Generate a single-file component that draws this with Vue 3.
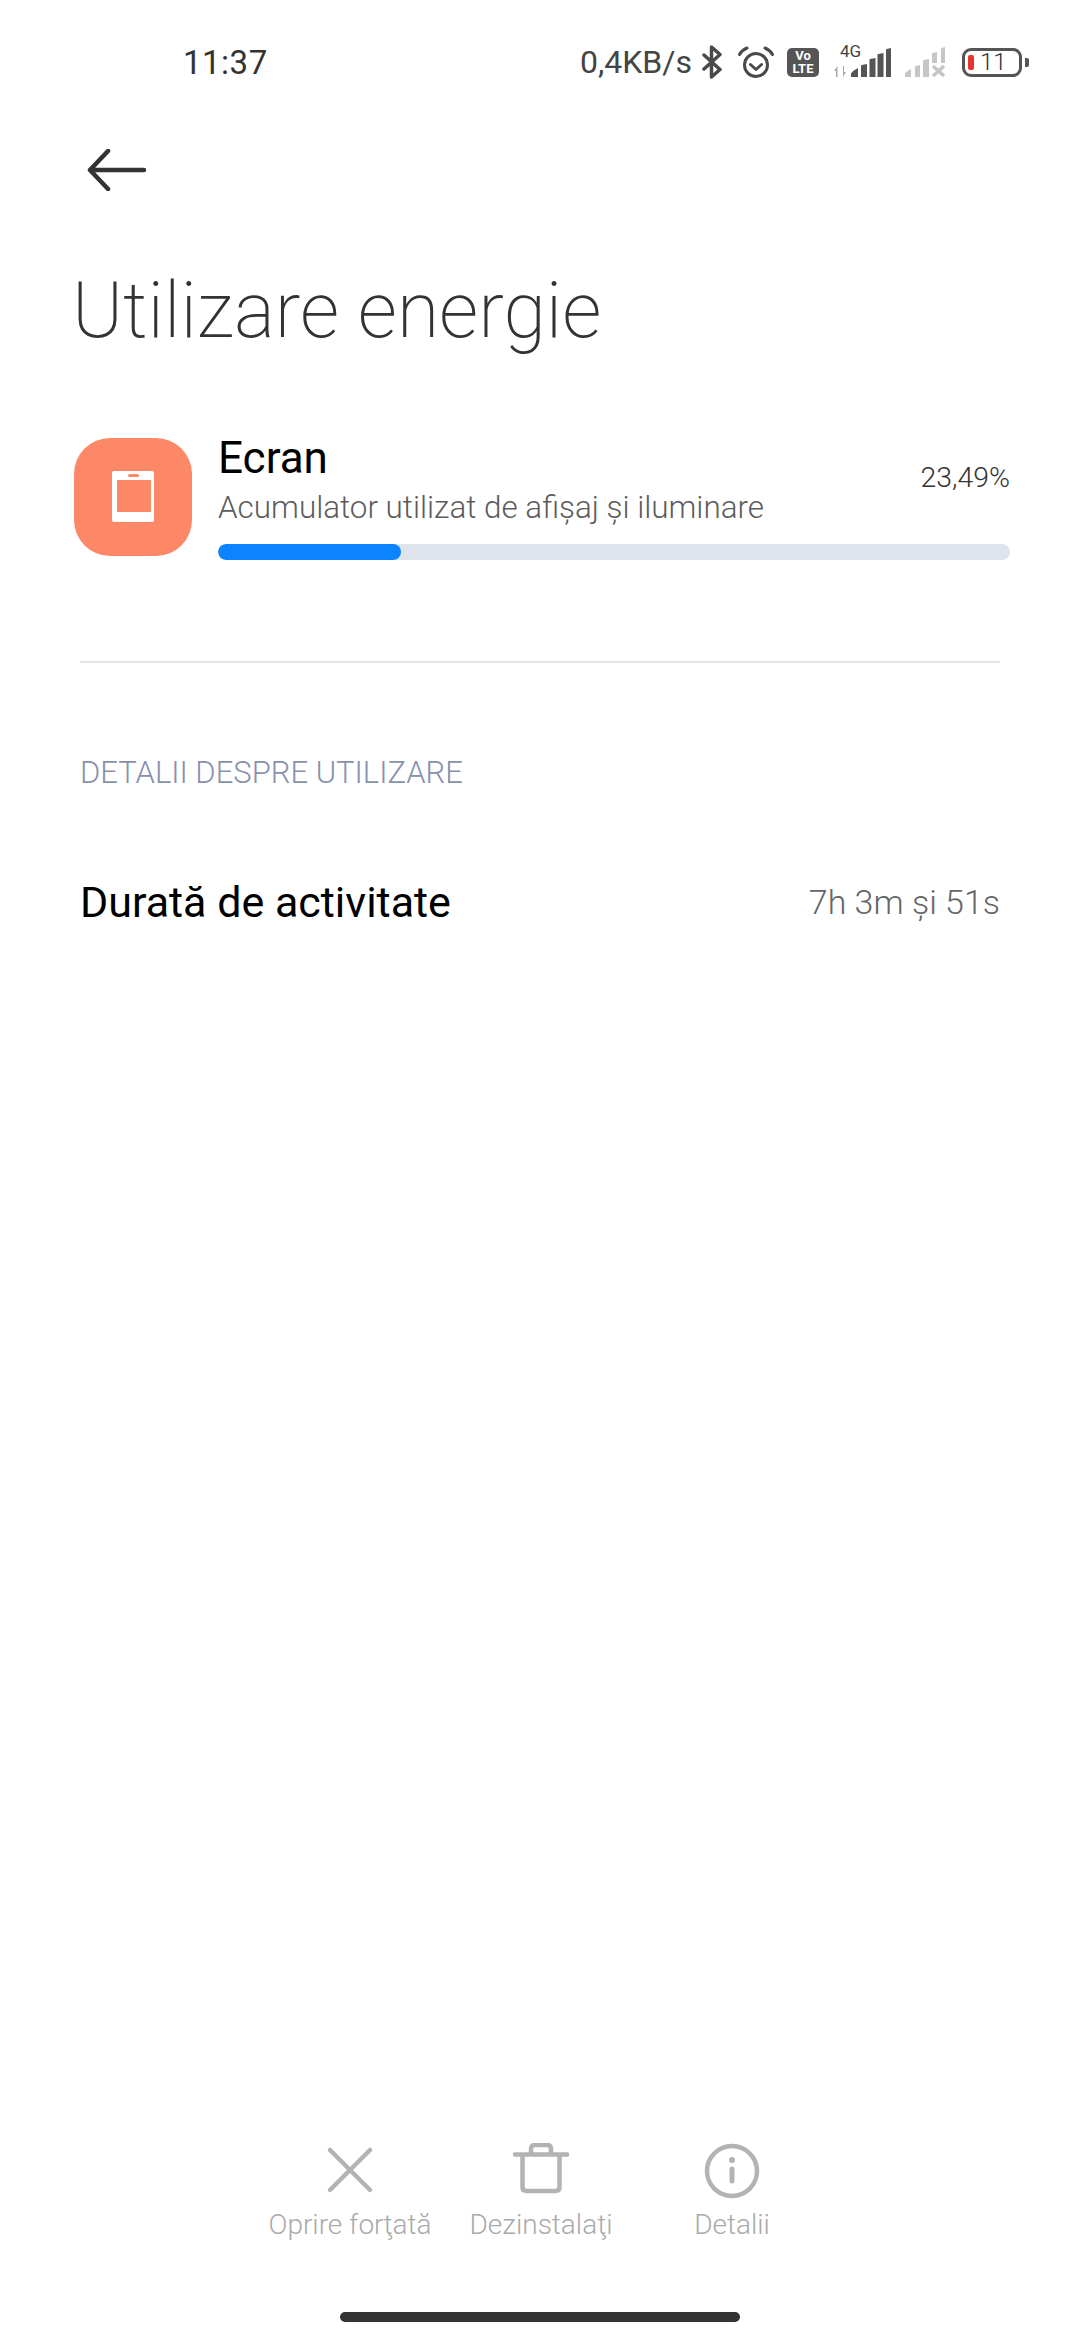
<script setup>
const actions = [
  { key: 'stop', label: 'Oprire forţată' },
  { key: 'trash', label: 'Dezinstalaţi' },
  { key: 'info', label: 'Detalii' },
]
</script>

<template>
  <div class="page">
    <header class="status">
      <span class="time">11:37</span>
      <div class="status-right">
        <span class="speed">0,4KB/s</span>
        <svg class="bt" width="20" height="34" viewBox="0 0 20 34" fill="none" stroke="#4a4a4a" stroke-width="3.500" stroke-linejoin="round" stroke-linecap="round"><path d="M2 10 18 24.500 9.500 32V2L18 9.500 2 24"/></svg>
        <svg class="alarm" width="36" height="33" viewBox="0 0 36 33" fill="none" stroke="#4a4a4a" stroke-width="3" stroke-linecap="round" stroke-linejoin="round"><circle cx="18" cy="19" r="11.500"/><path d="M12.500 18.500 18 23.500 23.500 18.500M1.500 8.500Q4 4 9 2M34.500 8.500Q32 4 27 2"/></svg>
        <div class="volte"><span>Vo</span><span>LTE</span></div>
        <div class="signal">
          <span class="g4">4G</span>
          <svg width="58" height="34" viewBox="0 0 58 34" fill="#555"><path d="M3 32v-6H1l3.500-5v11zM10 32V21h1v6h2l-3 5z" fill="#aaa"/><path d="M18 32v-3.500q2-3 7-5.500h0v9zM28 32V21q0-.8 .8-1l5.200-1v13zM36.500 32V15q0-.8 .8-1l5.200-1v19zM44.500 32V10q0-.8 .8-1l5.200-1v24zM53 32V5q0-.8 .8-1L58 3v29z"/></svg>
        </div>
        <svg class="signal2" width="40" height="34" viewBox="0 0 40 34" fill="#c6c6c6"><path d="M0 32v-3.500q2-2.500 6-4.500v8zM10 32V22q0-.8 .8-1l4.200-1v12zM18 32V16q0-.8 .8-1l5.200-1v18zM27 18V9q0-.8 .8-1l4.200-1v11zM36 18V4q0-.8 .8-1l3.200-1v16z"/><path d="M28 21l11 10M39 21 28 31" stroke="#c6c6c6" stroke-width="3.500" fill="none"/></svg>
        <div class="battery">
          <div class="battery-body"><i class="level"></i><span>11</span></div>
          <i class="nub"></i>
        </div>
      </div>
    </header>

    <div class="back">
      <svg width="60" height="42" viewBox="0 0 60 42" fill="none" stroke="#333" stroke-width="4.500" stroke-linecap="round" stroke-linejoin="round"><path d="M57 21H3M21 2 3 21l18 19"/></svg>
    </div>

    <h1 class="title">Utilizare energie</h1>

    <section class="app">
      <div class="app-icon">
        <svg width="42" height="51" viewBox="0 0 42 51"><path fill-rule="evenodd" fill="#fff" d="M2 0h38q2 0 2 2v47q0 2-2 2H2q-2 0-2-2V2q0-2 2-2zM5 9v32h34V9z"/><rect x="16" y="3" width="11" height="3" rx="1.500" fill="#fd8868"/></svg>
      </div>
      <div class="app-info">
        <div class="app-top">
          <div>
            <div class="app-name">Ecran</div>
            <div class="app-sub">Acumulator utilizat de afișaj și iluminare</div>
          </div>
          <div class="percent">23,49%</div>
        </div>
        <div class="track"><div class="fill"></div></div>
      </div>
    </section>

    <hr class="divider" />

    <div class="section">DETALII DESPRE UTILIZARE</div>

    <div class="row">
      <span class="row-label">Durată de activitate</span>
      <span class="row-value">7h 3m și 51s</span>
    </div>

    <nav class="actions">
      <div v-for="a in actions" :key="a.key" class="action">
        <svg v-if="a.key === 'stop'" width="56" height="56" viewBox="0 0 56 56" fill="none" stroke="#b3b3b3" stroke-width="4.500" stroke-linecap="round"><path d="M8 7l40 40M48 7 8 47"/></svg>
        <svg v-else-if="a.key === 'trash'" width="56" height="56" viewBox="0 0 56 56" fill="none" stroke="#b3b3b3" stroke-width="4.500" stroke-linecap="round" stroke-linejoin="round"><path d="M2 11.500h52M9.500 11.500V44q0 4 4 4h29q4 0 4-4V11.500M18 11.500V6q0-4 4-4h12q4 0 4 4v5.500"/></svg>
        <svg v-else width="56" height="56" viewBox="0 0 56 56" fill="none" stroke="#b3b3b3" stroke-width="4.500" stroke-linecap="round"><circle cx="28" cy="28" r="25"/><path d="M28 26v12" stroke-width="5"/><circle cx="28" cy="17" r="3" fill="#b3b3b3" stroke="none"/></svg>
        <span class="action-label">{{ a.label }}</span>
      </div>
    </nav>

    <div class="home"></div>
  </div>
</template>

<style>
body { margin: 0; background: #fff; }
</style>

<style scoped>
.page {
  width: 1080px;
  height: 2340px;
  display: flex;
  flex-direction: column;
  background: #fff;
  font-family: Roboto, "Noto Sans", sans-serif;
  overflow: hidden;
}
.status {
  height: 124px;
  flex: none;
  display: flex;
  align-items: center;
  justify-content: space-between;
  padding: 0 51px 0 183px;
  box-sizing: border-box;
}
.time { font-size: 33px; color: #333; letter-spacing: .5px; }
.status-right { display: flex; align-items: center; }
.speed { font-size: 32px; color: #444; }
.bt { margin-left: 10px; }
.alarm { margin-left: 16px; }
.volte {
  margin-left: 13px;
  width: 32px;
  height: 29px;
  border-radius: 5px;
  background: #555;
  color: #fff;
  font-size: 13px;
  line-height: 13px;
  font-weight: 700;
  display: flex;
  flex-direction: column;
  align-items: center;
  justify-content: center;
}
.signal { position: relative; margin-left: 14px; width: 58px; height: 34px; }
.signal svg { display: block; }
.g4 { position: absolute; left: 7px; top: -3px; font-size: 17px; line-height: 18px; color: #444; }
.signal2 { margin-left: 14px; }
.battery { margin-left: 17px; display: flex; align-items: center; gap: 3px; }
.battery-body {
  width: 60px;
  height: 29px;
  box-sizing: border-box;
  border: 3.500px solid #555;
  border-radius: 9px;
  display: flex;
  align-items: center;
  padding-left: 3px;
  gap: 6px;
}
.level { width: 6px; height: 15px; border-radius: 2px; background: #e8352e; }
.battery-body span { font-size: 24px; font-weight: 300; color: #333; line-height: 1; }
.nub { width: 4px; height: 9px; background: #555; border-radius: 0 2px 2px 0; }
.back {
  height: 92px;
  flex: none;
  display: flex;
  align-items: center;
  padding-left: 87px;
}
.back svg { display: block; }
.title {
  margin: 50px 0 0 72px;
  font-size: 77px;
  font-weight: 200;
  line-height: 90px;
  color: #333;
}
.app {
  margin-top: 77px;
  padding: 0 70px 0 74px;
  display: flex;
  align-items: center;
  gap: 26px;
}
.app-icon {
  width: 118px;
  height: 118px;
  flex: none;
  border-radius: 36px;
  background: #fd8868;
  display: flex;
  align-items: center;
  justify-content: center;
}
.app-icon svg { display: block; }
.app-info { flex: 1; }
.app-top { display: flex; align-items: center; justify-content: space-between; }
.app-name { font-size: 44px; line-height: 50px; color: #000; }
.app-sub { margin-top: 5px; font-size: 31.400px; font-weight: 300; line-height: 40px; color: #5c5c5c; }
.percent { padding-bottom: 6px; font-size: 28.400px; font-weight: 300; color: #333; }
.track { margin-top: 16px; height: 16px; border-radius: 8px; background: #dfe3ec; overflow: hidden; }
.fill { width: 23.100%; height: 100%; border-radius: 8px; background: #0d84ff; }
.divider {
  margin: 101px 80px 0;
  border: 0;
  height: 2px;
  background: #e5e5e5;
}
.section {
  margin: 93px 80px 0;
  font-size: 31px;
  font-weight: 300;
  line-height: 34px;
  color: #8790ad;
}
.row {
  margin: 87px 80px 0;
  display: flex;
  align-items: center;
  justify-content: space-between;
}
.row-label { font-size: 43px; color: #000; }
.row-value { font-size: 34px; font-weight: 300; color: #666; }
.actions {
  margin-top: auto;
  display: flex;
  justify-content: center;
  padding-left: 2px;
}
.action {
  width: 191px;
  display: flex;
  flex-direction: column;
  align-items: center;
  gap: 8px;
}
.action svg { display: block; }
.action-label { font-size: 28px; font-weight: 300; color: #aaa; line-height: 36px; white-space: nowrap; }
.home {
  margin: 69px auto 18px;
  width: 400px;
  height: 10px;
  flex: none;
  border-radius: 5px;
  background: #333;
}
</style>
